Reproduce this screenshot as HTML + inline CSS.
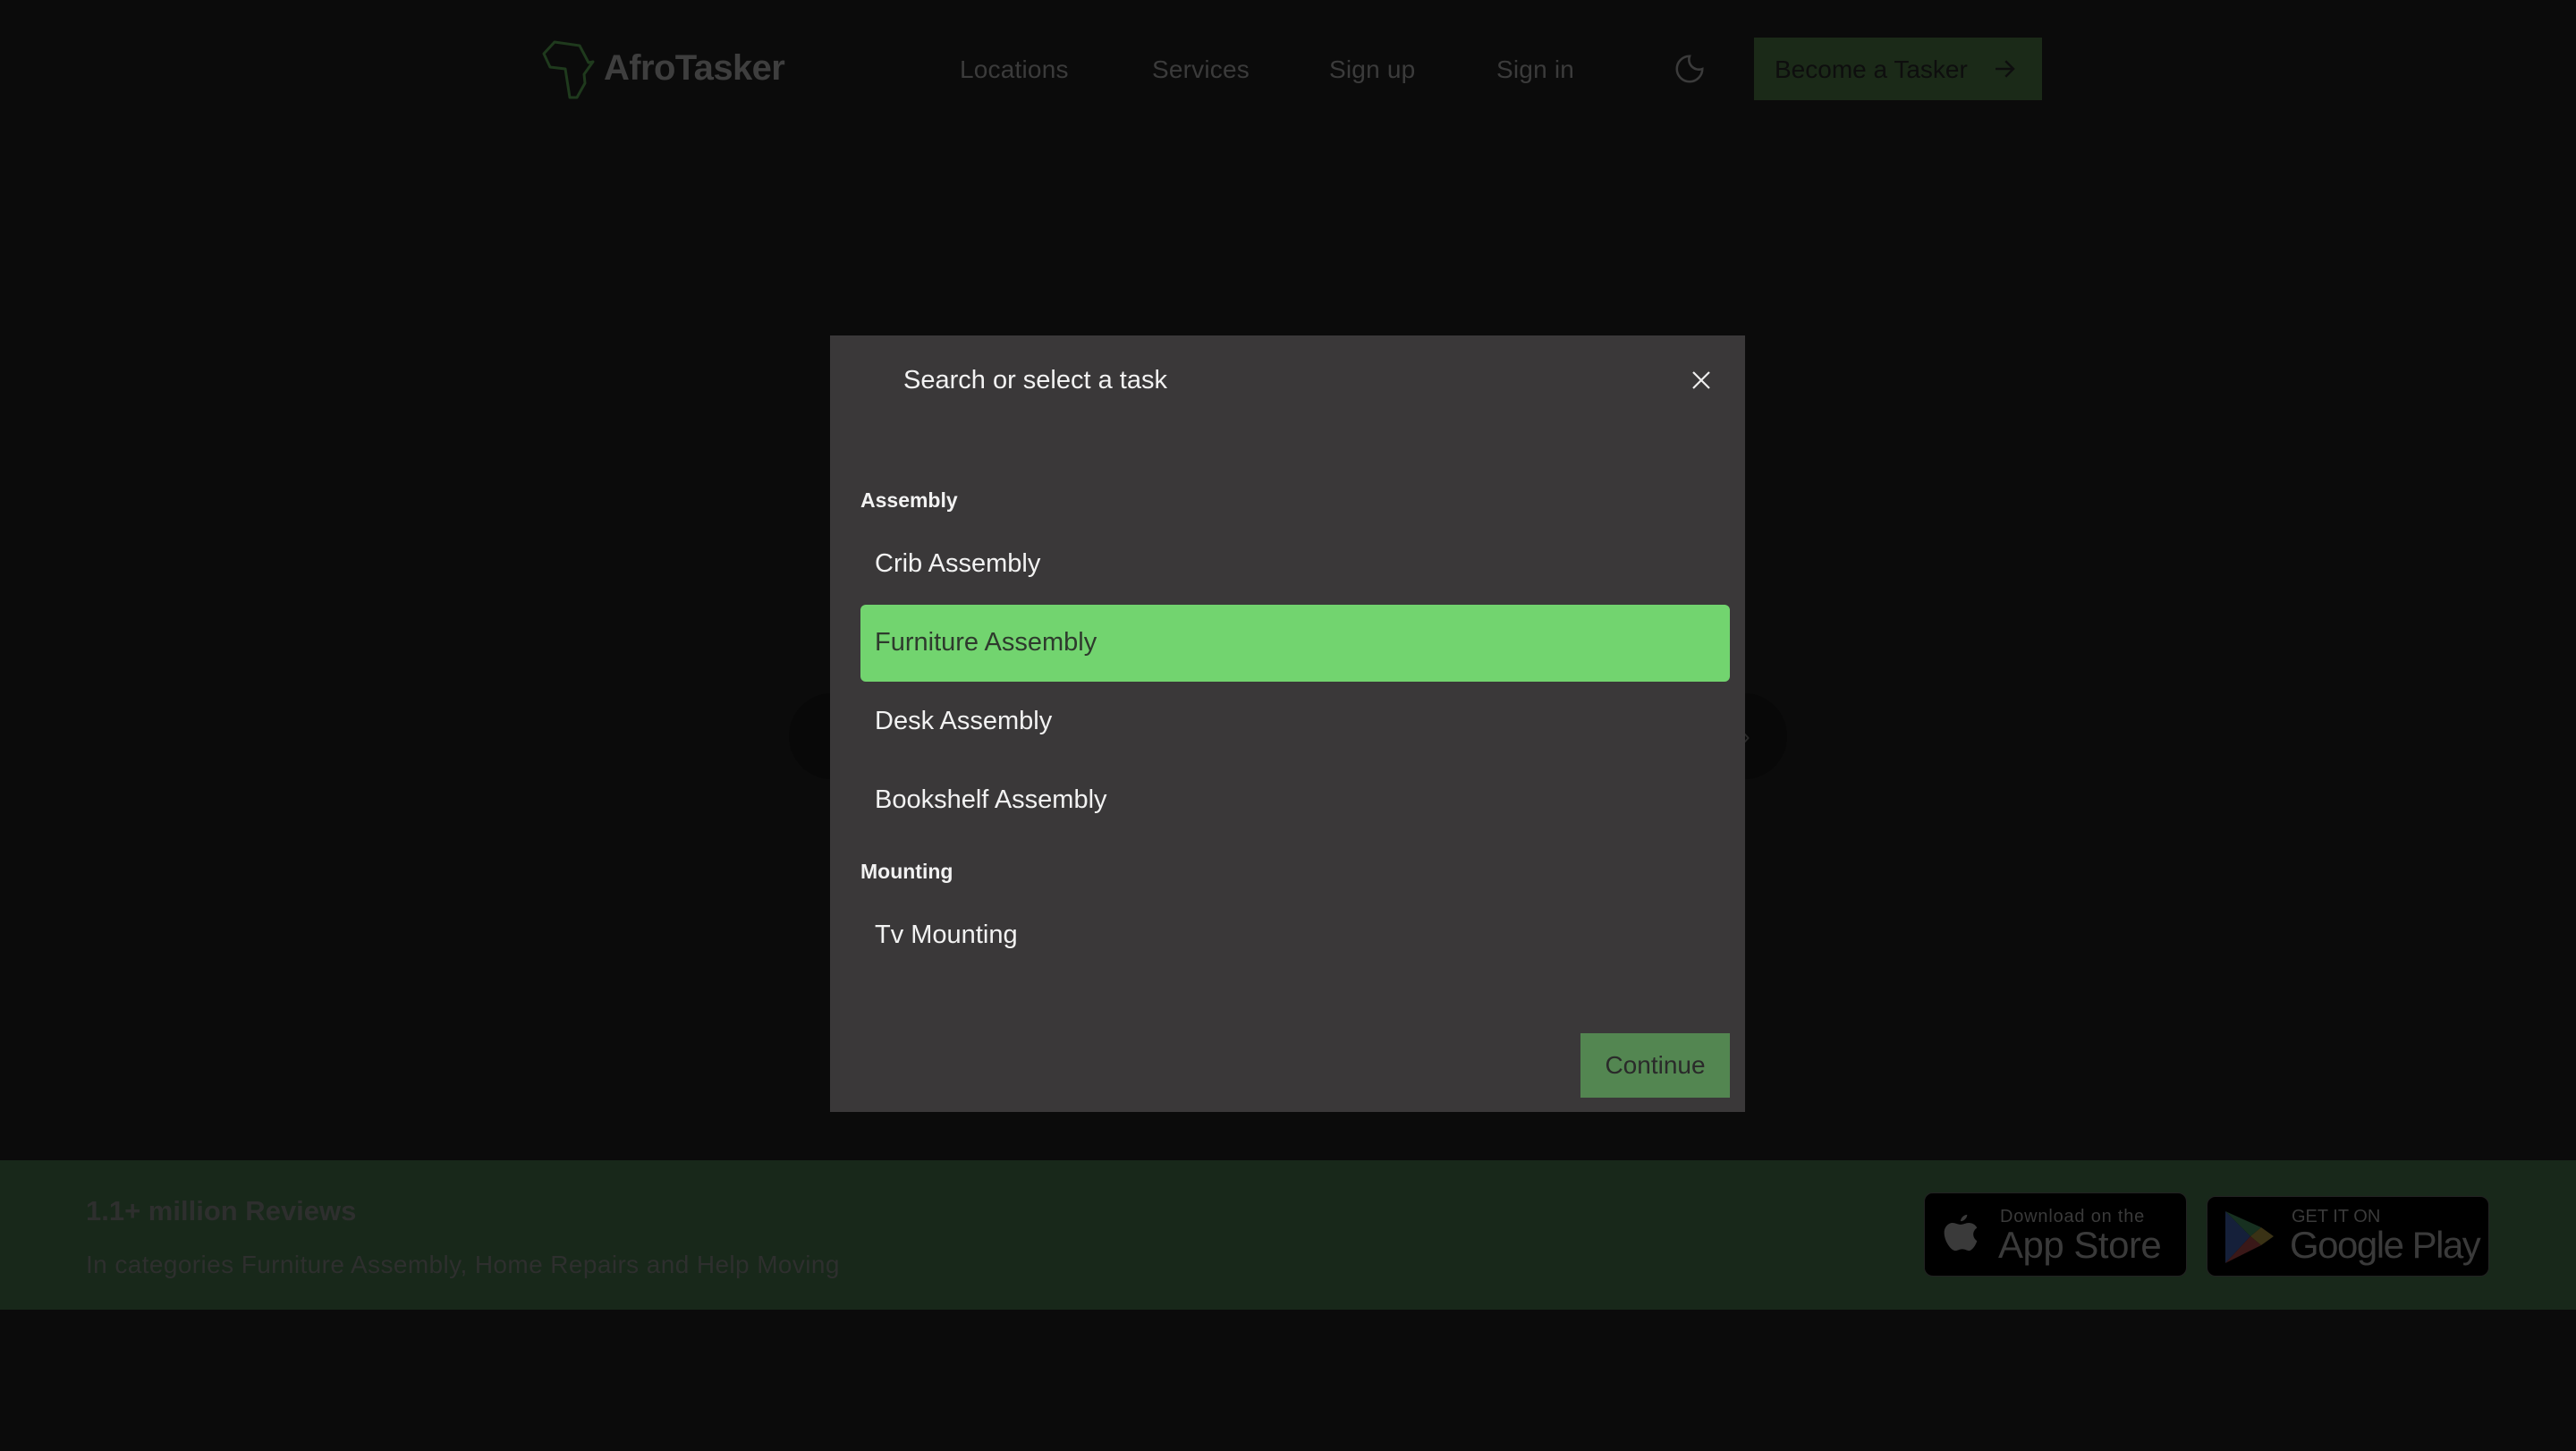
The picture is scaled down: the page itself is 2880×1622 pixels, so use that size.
<!DOCTYPE html>
<html><head><meta charset="utf-8"><style>
*{margin:0;padding:0;box-sizing:border-box}
body{width:2880px;height:1622px;background:#0b0b0b;font-family:"Liberation Sans",sans-serif;position:relative;overflow:hidden}
.a{position:absolute;white-space:nowrap}
.nav{color:#3b3b3b;font-size:28px;top:62px;letter-spacing:0.2px}
.item{position:absolute;left:978px;font-size:29px;color:#f2f2f2;letter-spacing:0px}
.cat{position:absolute;left:962px;font-size:23px;font-weight:bold;color:#f2f2f2;letter-spacing:0px}
</style></head><body>
<svg class="a" style="left:0;top:0" width="700" height="130"><polygon points="608,60 620,47 648,51 658,70 663,69 653,83 654,93 645,109 637,109 632,77 615,75" fill="none" stroke="#1f3a1d" stroke-width="3" stroke-linejoin="round"/></svg>
<div class="a" style="left:675px;top:54px;font-size:40px;font-weight:bold;color:#3e3e3e;letter-spacing:-0.6px">AfroTasker</div>
<div class="a nav" style="left:1073px">Locations</div>
<div class="a nav" style="left:1288px">Services</div>
<div class="a nav" style="left:1486px">Sign up</div>
<div class="a nav" style="left:1673px">Sign in</div>
<svg class="a" style="left:1870px;top:58px" width="38" height="38" viewBox="0 0 24 24"><path d="M12 3a7 7 0 0 0 9 9 9 9 0 1 1-9-9z" fill="none" stroke="#3b3b3b" stroke-width="1.6"/></svg>
<div class="a" style="left:1961px;top:42px;width:322px;height:70px;background:#1b2a18"></div>
<div class="a" style="left:1984px;top:62px;font-size:28px;color:#0e0e0e">Become a Tasker</div>
<svg class="a" style="left:2226px;top:62px" width="30" height="30" viewBox="0 0 24 24"><path d="M4 12h15M13 5l7 7-7 7" fill="none" stroke="#0e0e0e" stroke-width="2"/></svg>
<div class="a" style="left:882px;top:775px;width:1116px;height:96px;border-radius:48px;background:#080808"></div>
<div class="a" style="left:1948px;top:808px;font-size:26px;color:#2a2a2a">›</div>
<div class="a" style="left:0;top:1297px;width:2880px;height:167px;background:#18281a"></div>
<div class="a" style="left:96px;top:1336px;font-size:31px;font-weight:bold;color:#2e2f2e;letter-spacing:0px">1.1+ million Reviews</div>
<div class="a" style="left:96px;top:1398px;font-size:28px;color:#2e2f2e;letter-spacing:0.4px">In categories Furniture Assembly, Home Repairs and Help Moving</div>
<div class="a" style="left:2151px;top:1333px;width:294px;height:94px;border-radius:10px;background:#000;border:1px solid #222"></div>
<svg class="a" style="left:2170px;top:1350px" width="44" height="56" viewBox="0 0 24 30"><path d="M16 4c0 2-2 4-4 4 0-2 2-4 4-4zM12 10c2 0 3-1 5-1 2 0 4 1 5 3-3 2-3 6 0 8-1 3-3 6-5 6-1 0-2-1-4-1s-3 1-4 1c-3 0-7-6-7-11 0-4 3-6 5-6 2 0 3 1 5 1z" fill="#3a3a3a"/></svg>
<div class="a" style="left:2236px;top:1349px;font-size:20px;color:#3a3a3a;letter-spacing:0.8px">Download on the</div>
<div class="a" style="left:2234px;top:1368px;font-size:42px;color:#3a3a3a;letter-spacing:-0.5px">App Store</div>
<div class="a" style="left:2467px;top:1337px;width:316px;height:90px;border-radius:10px;background:#000;border:1px solid #222"></div>
<svg class="a" style="left:2486px;top:1352px" width="58" height="62" viewBox="0 0 58 62"><polygon points="2,2 30,30 2,60" fill="#15203a"/><polygon points="2,2 30,30 42,20" fill="#173020"/><polygon points="30,30 42,20 56,30 42,40" fill="#3a3215"/><polygon points="2,60 30,30 42,40" fill="#3a1818"/></svg>
<div class="a" style="left:2562px;top:1349px;font-size:20px;color:#3a3a3a">GET IT ON</div>
<div class="a" style="left:2560px;top:1368px;font-size:42px;color:#3a3a3a;letter-spacing:-1.5px">Google Play</div>
<div class="a" style="left:928px;top:375px;width:1023px;height:868px;background:#3a3839"></div>
<div class="a" style="left:1010px;top:409px;font-size:29px;color:#f2f2f2;letter-spacing:0px">Search or select a task</div>
<svg class="a" style="left:1891px;top:414px" width="22" height="22" viewBox="0 0 22 22"><path d="M2 2l18 18M20 2L2 20" stroke="#eee" stroke-width="2.2"/></svg>
<div class="cat" style="top:546px">Assembly</div>
<div class="item" style="top:614px">Crib Assembly</div>
<div class="a" style="left:962px;top:676px;width:972px;height:86px;border-radius:6px;background:#72d46f"></div>
<div class="item" style="top:702px;color:#2e3a2d">Furniture Assembly</div>
<div class="item" style="top:790px">Desk Assembly</div>
<div class="item" style="top:878px">Bookshelf Assembly</div>
<div class="cat" style="top:961px">Mounting</div>
<div class="item" style="top:1029px">Tv Mounting</div>
<div class="a" style="left:1767px;top:1155px;width:167px;height:72px;background:#538651"></div>
<div class="a" style="left:1767px;top:1175px;width:167px;text-align:center;font-size:28px;color:#2a2a2a">Continue</div>
</body></html>
